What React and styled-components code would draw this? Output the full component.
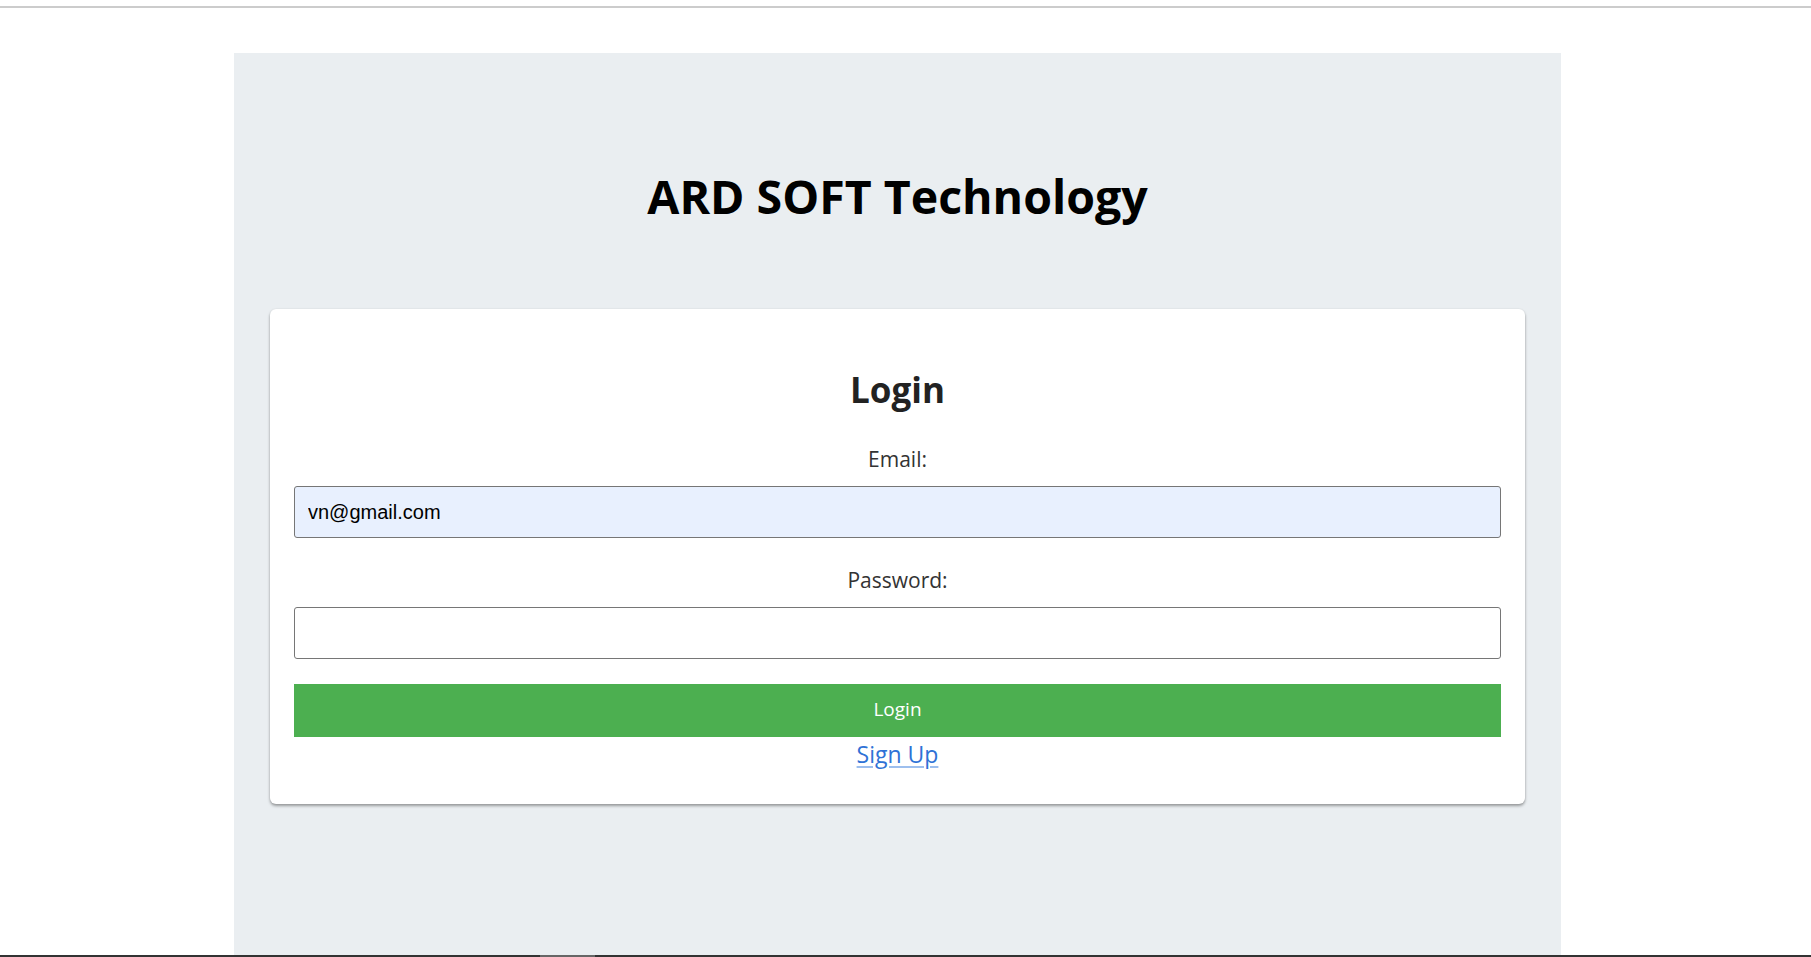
import React from "react";
import styled, { createGlobalStyle } from "styled-components";

const GlobalStyle = createGlobalStyle`
  html, body {
    margin: 0;
    padding: 0;
    background: #ffffff;
    overflow: hidden;
  }
  * {
    box-sizing: border-box;
  }
`;

const App = () => {
  return (
    <>
      <GlobalStyle />
      <TopRule />
      <Page>
        <Panel>
          <Title>ARD SOFT Technology</Title>
          <Card>
            <Form onSubmit={(e) => e.preventDefault()}>
              <Heading>Login</Heading>
              <Label htmlFor="email">Email:</Label>
              <Input id="email" type="email" defaultValue="vn@gmail.com" $filled />
              <Label htmlFor="password" $gap={27}>
                Password:
              </Label>
              <Input id="password" type="password" />
              <Button type="submit">Login</Button>
              <SignUp href="#">Sign Up</SignUp>
            </Form>
          </Card>
        </Panel>
      </Page>
      <BottomBar>
        <Thumb />
      </BottomBar>
    </>
  );
};

export default App;

const TopRule = styled.div`
  height: 2px;
  margin-top: 6px;
  background: #cccccc;
`;

const Page = styled.div`
  width: 1795px;
  display: flex;
  justify-content: center;
  padding-top: 45px;
`;

const Panel = styled.main`
  width: 1327px;
  height: calc(100vh - 53px);
  background: #eaeef1;
  display: flex;
  flex-direction: column;
  padding: 113px 36px 0;
`;

const Title = styled.h1`
  margin: 0;
  font-family: "Open Sans", "Noto Sans", sans-serif;
  font-weight: 700;
  font-size: 46.5px;
  line-height: 60px;
  color: #000000;
  text-align: center;
`;

const Card = styled.section`
  margin-top: 83px;
  background: #ffffff;
  border-radius: 6px;
  box-shadow: 0 2px 3px rgba(0, 0, 0, 0.35), 0 0 2px rgba(0, 0, 0, 0.08);
  padding: 24px 24px 35px;
`;

const Form = styled.form`
  display: flex;
  flex-direction: column;
  align-items: stretch;
`;

const Heading = styled.h2`
  margin: 37px 0 0;
  font-family: "Open Sans", "Noto Sans", sans-serif;
  font-weight: 700;
  font-size: 35px;
  line-height: 40px;
  color: #222222;
  text-align: center;
`;

const Label = styled.label`
  display: block;
  margin-top: ${(props) => props.$gap || 34}px;
  margin-bottom: 12px;
  font-family: "Open Sans", "Noto Sans", sans-serif;
  font-size: 21px;
  line-height: 30px;
  color: #333333;
  text-align: center;
`;

const Input = styled.input`
  width: 100%;
  height: 52px;
  padding: 0 13px;
  border: 1px solid #767676;
  border-radius: 3px;
  background: ${(props) => (props.$filled ? "#e8f0fe" : "#ffffff")};
  font-family: "Liberation Sans", Arial, sans-serif;
  font-size: 20px;
  color: #000000;
  outline: none;
`;

const Button = styled.button`
  margin-top: 25px;
  height: 53px;
  width: 100%;
  border: none;
  padding: 0 0 4px;
  background: #4caf50;
  color: #ffffff;
  font-family: "Open Sans", "Noto Sans", sans-serif;
  font-size: 19px;
  cursor: pointer;
`;

const SignUp = styled.a`
  align-self: center;
  margin-top: 2px;
  font-family: "Open Sans", "Noto Sans", sans-serif;
  font-size: 23px;
  line-height: 30px;
  color: #2f72d6;
  text-decoration: underline;
  text-decoration-color: #9dbfee;
  text-underline-offset: 3px;
`;

const BottomBar = styled.div`
  position: fixed;
  left: 0;
  right: 0;
  bottom: 0;
  height: 2px;
  background: #333333;
`;

const Thumb = styled.div`
  width: 55px;
  height: 100%;
  margin-left: 540px;
  background: #666666;
`;
